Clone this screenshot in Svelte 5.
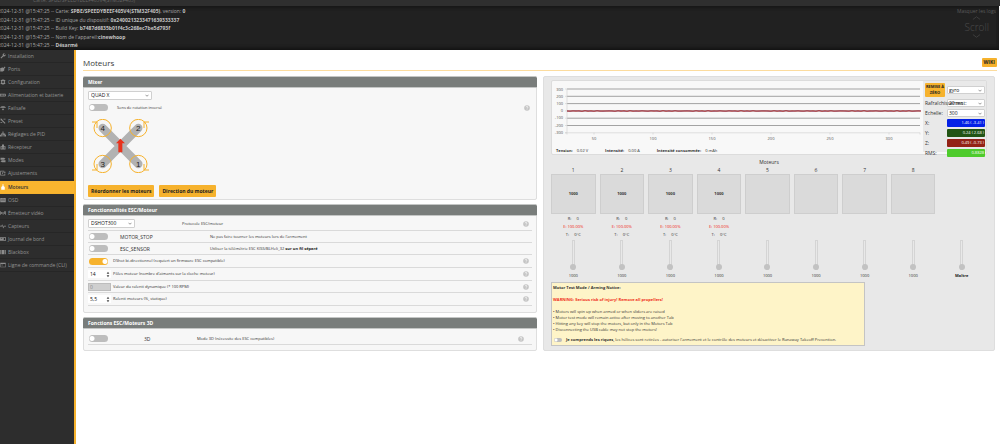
<script lang="ts">
  const logs = [
    { text: 'Carte: ', strong: 'SPBE/SPEEDYBEEF405V4(STM32F405)', rest: ', version: ', end: '0' },
    { text: 'ID unique du dispositif: ', strong: '0x2400213233471639333337' },
    { text: 'Build Key: ', strong: 'b7487d6835b01f4c3c268ec7be5d793f' },
    { text: "Nom de l'appareil:", strong: 'cinewhoop' },
    { text: '', strong: 'Désarmé' },
  ];

  const tabs = [
    { name: 'Installation', icon: 'M2 19 L11 10 A6 6 0 0 1 19 2 L15 6 L18 9 L22 5 A6 6 0 0 1 14 13 L5 22 Z' },
    { name: 'Ports', icon: 'M1 8 H7 V4 L13 8 L19 2 L22 5 L17 11 V18 L11 22 H1 Z' },
    { name: 'Configuration', icon: 'M10 1 H14 L15 5 L19 3 L22 7 L19 10 V14 L22 17 L19 21 L15 19 L14 23 H10 L9 19 L5 21 L2 17 L5 14 V10 L2 7 L5 3 L9 5 Z M12 8 A4 4 0 1 0 12 16 A4 4 0 1 0 12 8 Z' },
    { name: 'Alimentation et batterie', icon: 'M0 7 H22 V10 H24 V15 H22 V18 H0 Z M3 10 V15 H7 V10 Z M9 10 V15 H13 V10 Z M15 10 V15 H19 V10 Z' },
    { name: 'Failsafe', icon: 'M0 10 C4 3 20 3 24 10 L19 12 L16 10 L13 12 V16 H17 L12 22 L7 16 H11 V12 L8 10 L5 12 Z' },
    { name: 'Preset', icon: 'M2 2 L10 4 L8 6 L22 20 L19 23 L5 9 L3 11 Z M14 3 H22 V6 H14 Z M2 16 H9 V19 H2 Z' },
    { name: 'Réglages de PID', icon: 'M10 2 H14 V10 H21 V15 H24 V22 H17 V15 H14 V22 H10 V13 H7 V22 H0 V15 H4 V10 H10 Z' },
    { name: 'Récepteur', icon: 'M8 2 H16 V9 H22 V22 H2 V9 H8 Z M5 13 V18 H9 V13 Z M15 13 V18 H19 V13 Z' },
    { name: 'Modes', icon: 'M2 3 H16 L22 7 L16 11 H2 Z M22 13 H8 L2 17 L8 21 H22 Z' },
    { name: 'Ajustements', icon: 'M1 3 H17 V6 H4 V19 H18 V14 H21 V22 H1 Z M8 9 H11 V16 H8 Z M14 7 H22 V11 H14 Z' },
    { name: 'Moteurs', icon: 'M10 1 H14 V8 L19 12 V23 H5 V12 L10 8 Z' },
    { name: 'OSD', icon: 'M1 4 H23 V21 H1 Z M4 11 V13 H20 V11 Z M11 6 V9 H13 V6 Z' },
    { name: 'Émetteur vidéo', icon: 'M0 5 H3 V19 H0 Z M5 8 H9 V16 H5 Z M11 8 H14 V19 H11 Z M16 5 H19 V16 H16 Z M21 5 H24 V19 H21 Z' },
    { name: 'Capteurs', icon: 'M0 11 H6 L9 5 L13 16 L15 11 H24 V14 H17 L13 22 L9 11 L8 14 H0 Z' },
    { name: 'Journal de bord', icon: 'M0 5 H24 V19 H0 Z M3 8 V10 H9 V8 Z M15 8 V16 H21 V8 Z' },
    { name: 'Blackbox', icon: 'M1 4 H6 V21 H1 Z M8 4 H17 V21 H8 Z M19 4 H23 V21 H19 Z' },
    { name: 'Ligne de commande (CLI)', icon: 'M1 3 H23 V21 H1 Z M3 8 V19 H21 V8 Z M5 11 H12 V13 H5 Z' },
  ];

  const rotors = [
    { n: 4, x: 35, y: 27, flag: 'M3 9 H18 V27' },
    { n: 2, x: 142, y: 27, flag: 'M174 9 H159 V27' },
    { n: 3, x: 35, y: 135, flag: 'M3 153 H18 V135' },
    { n: 1, x: 142, y: 135, flag: 'M174 153 H159 V135' },
  ];

  const gridRows = [300, 200, 100, 0, -100, -200, -300];
  const gridTicks = [50, 100, 150, 200, 250, 300];

  const readings = [
    { label: 'X:', value: '1.46 ( -3.41 )', color: '#0421e6' },
    { label: 'Y:', value: '0.24 ( 2.68 )', color: '#225414' },
    { label: 'Z:', value: '0.49 ( -0.73 )', color: '#932216' },
    { label: 'RMS:', value: '0.8828', color: '#4ecb2c' },
  ];

  const motors = [1, 2, 3, 4, 5, 6, 7, 8];

  let sliders = $state([1000, 1000, 1000, 1000, 1000, 1000, 1000, 1000, 1000]);
  let reversed = $state(false);
  let motorStop = $state(false);
  let escSensor = $state(false);
  let bidir = $state(true);
  let mode3d = $state(false);
  let accepted = $state(false);
  let poles = $state(14);
  let idleValue = $state('5,5');

  // small deterministic wobble around zero for the gyro traces
  function trace(seed: number) {
    let d = '';
    for (let i = 0; i <= 118; i++) {
      const y = 30 + Math.sin(i * seed) * 0.3;
      d += `${i ? 'L' : 'M'}${15 + i * 3} ${y.toFixed(2)} `;
    }
    return d;
  }
</script>

{#snippet help()}
  <svg class="help" viewBox="0 0 12 12" role="img" aria-label="Aide">
    <circle cx="6" cy="6" r="5.6" fill="#c4c4c4" />
    <path d="M4.2 4.7 A1.8 1.8 0 1 1 6.6 6.2 Q6 6.5 6 7.3 M6 8.4 V9.6" fill="none" stroke="#fff" stroke-width="1.3" />
  </svg>
{/snippet}

<div class="app">
  <header class="topbar"><span>Carte: SPBE/SPEEDYBEEF405V4(STM32F405)</span></header>

  <section class="log">
    <div class="log-lines">
      {#each logs as line}
        <p>2024-12-31 @15:47:25 -- {line.text}<b>{line.strong}</b>{line.rest ?? ''}<b>{line.end ?? ''}</b></p>
      {/each}
    </div>
    <div class="log-side">
      <a href="#logs">Masquer les logs</a>
      <div class="scroll">
        <svg viewBox="0 0 10 4"><path d="M1 3.6 L5 .6 L9 3.6" /></svg>
        <span>Scroll</span>
        <svg viewBox="0 0 10 4"><path d="M1 .4 L5 3.4 L9 .4" /></svg>
      </div>
    </div>
  </section>

  <div class="body">
    <nav class="sidebar">
      {#each tabs as tab}
        <a href="#{tab.name}" class:active={tab.name === 'Moteurs'}>
          <svg viewBox="0 0 24 24"><path d={tab.icon} fill-rule="evenodd" /></svg>
          <span>{tab.name}</span>
        </a>
      {/each}
    </nav>

    <main class="content">
      <div class="title">
        <h1>Moteurs</h1>
        <a class="wiki" href="#wiki">WIKI</a>
      </div>

      <div class="columns">
        <div class="left">
          <section class="box">
            <h2>Mixer</h2>
            <div class="mixer">
              <select class="select mixer-select" aria-label="Mixer"><option>QUAD X</option></select>
              <div class="mixer-row">
                <input id="reversed" class="toggle" type="checkbox" bind:checked={reversed} />
                <label for="reversed">Sens de rotation inversé</label>
                {@render help()}
              </div>
              <svg class="quad" viewBox="0 0 177 162">
                <path d="M35 27 L142 135 M142 27 L35 135" stroke="#b2b2b2" stroke-width="25" stroke-linecap="round" />
                {#each rotors as r}
                  <circle cx={r.x} cy={r.y} r="26" />
                  <path class="flag" d={r.flag} />
                  <text x={r.x} y={r.y + 8}>{r.n}</text>
                {/each}
                <path d="M88 59 L102 73 H94 V100 H82 V73 H75 Z" fill="#e8321c" />
              </svg>
              <div class="buttons">
                <button>Réordonner les moteurs</button>
                <button>Direction du moteur</button>
              </div>
            </div>
          </section>

          <section class="box">
            <h2>Fonctionnalités ESC/Moteur</h2>
            <div class="rows">
              <div class="row first">
                <span class="lead proto"><select id="proto" class="select proto-select"><option>DSHOT300</option></select></span>
                <label for="proto">Protocole ESC/moteur</label>
                {@render help()}
              </div>
              <div class="row">
                <input id="stop" class="toggle" type="checkbox" bind:checked={motorStop} />
                <label class="feature" for="stop">MOTOR_STOP</label>
                <span>Ne pas faire tourner les moteurs lors de l'armement</span>
              </div>
              <div class="row">
                <input id="sensor" class="toggle" type="checkbox" bind:checked={escSensor} />
                <label class="feature" for="sensor">ESC_SENSOR</label>
                <span>Utiliser la télémétrie ESC KISS/BLHeli_32 <b>sur un fil séparé</b></span>
              </div>
              <div class="row tall">
                <span class="lead"><input id="bidir" class="toggle" type="checkbox" bind:checked={bidir} /></span>
                <label for="bidir">DShot bi-directionnel (requiert un firmware ESC compatible)</label>
                {@render help()}
              </div>
              <div class="row tall">
                <span class="lead num">
                  <input id="poles" type="text" inputmode="numeric" bind:value={poles} />
                  <svg viewBox="0 0 6 10"><path d="M1 4 L3 1 L5 4 Z M1 6 L3 9 L5 6 Z" /></svg>
                </span>
                <label for="poles">Pôles moteur (nombre d'aimants sur la cloche moteur)</label>
                {@render help()}
              </div>
              <div class="row">
                <span class="lead num"><input id="dyn" type="text" value="0" disabled /></span>
                <label for="dyn">Valeur du ralenti dynamique (* 100 RPM)</label>
                {@render help()}
              </div>
              <div class="row tall">
                <span class="lead num">
                  <input id="idle" type="text" inputmode="decimal" bind:value={idleValue} />
                  <svg viewBox="0 0 6 10"><path d="M1 4 L3 1 L5 4 Z M1 6 L3 9 L5 6 Z" /></svg>
                </span>
                <label for="idle">Ralenti moteurs (%, statique)</label>
                {@render help()}
              </div>
            </div>
          </section>

          <section class="box">
            <h2>Fonctions ESC/Moteurs 3D</h2>
            <div class="rows three">
              <div class="row">
                <input id="mode3d" class="toggle" type="checkbox" bind:checked={mode3d} />
                <label class="feature" for="mode3d">3D</label>
                <span>Mode 3D (nécessite des ESC compatibles)</span>
                {@render help()}
              </div>
            </div>
          </section>
        </div>

        <section class="right">
          <div class="plot">
            <div class="graph">
              <svg class="chart" viewBox="0 0 371 62">
                {#each gridRows as v, i}
                  <text class="y" x="11" y={9.5 + i * 7.2}>{v}</text>
                  <path class={i === 6 ? 'axis' : 'grid'} d="M{i === 6 ? 13 : 15} {8 + i * 7.3} H368" />
                  <path class="axis" d="M13 {8 + i * 7.3} H15" />
                {/each}
                <path class="axis" d="M15 8 V53.5 M368 51.8 V53.5" />
                {#each gridTicks as v, i}
                  <path class="axis" d="M{42 + i * 59} 51.8 V53.5" />
                  <text class="x" x={42 + i * 59} y="58.5">{v}</text>
                {/each}
                <g class="traces">
                  <path d={trace(1.7)} stroke="#8a4a80" />
                  <path d={trace(2.9)} stroke="#b5382a" />
                </g>
              </svg>
              <dl class="power">
                <div><dt>Tension:</dt><dd>0.02 V</dd></div>
                <div><dt>Intensité:</dt><dd>0.00 A</dd></div>
                <div><dt>Intensité consommée:</dt><dd>0 mAh</dd></div>
              </dl>
            </div>
            <div class="panel">
              <div class="reading">
                <button class="reset">REMISE À ZÉRO</button>
                <select class="select" aria-label="Capteur"><option>gyro</option></select>
              </div>
              <div class="reading">
                <label for="rate">Rafraîchissement:</label>
                <select id="rate" class="select"><option>20 ms</option></select>
              </div>
              <div class="reading">
                <label for="scale">Echelle:</label>
                <select id="scale" class="select"><option>300</option></select>
              </div>
              {#each readings as r}
                <div class="reading">
                  <span class="name">{r.label}</span>
                  <output style="background: {r.color}">{r.value}</output>
                </div>
              {/each}
            </div>
          </div>

          <h3>Moteurs</h3>
          <div class="motors">
            {#each motors as m}
              <div class="motor">
                <span>{m}</span>
                <div class="bar">{m <= 4 ? '1000' : ''}</div>
                <div class="telemetry">
                  {#if m <= 4}
                    <p>R: &nbsp;&nbsp;&nbsp; 0</p>
                    <p class="error">E: 100.00%</p>
                    <p>T: &nbsp;&nbsp;&nbsp; 0°C</p>
                  {/if}
                </div>
              </div>
            {/each}
          </div>
          <div class="motors">
            {#each sliders as _, i}
              <div class="slider">
                <input id="slider{i}" type="range" min="1000" max="2000" bind:value={sliders[i]} />
                <label for="slider{i}" class:master={i === 8}>{i === 8 ? 'Maître' : sliders[i]}</label>
              </div>
            {/each}
          </div>

          <div class="notice">
            <p><b>Motor Test Mode / Arming Notice:</b></p>
            <p class="warning">WARNING: Serious risk of injury! Remove all propellers!</p>
            <ul>
              <li>• Motors will spin up when armed or when sliders are raised</li>
              <li>• Motor test mode will remain active after moving to another Tab</li>
              <li>• Hitting any key will stop the motors, but only in the Motors Tab</li>
              <li>• Disconnecting the USB cable may not stop the motors!</li>
            </ul>
            <div class="accept">
              <input id="accept" class="toggle small" type="checkbox" bind:checked={accepted} />
              <label for="accept"><b>Je comprends les riques</b>, les hélices sont retirées - autoriser l'armement et le contrôle des moteurs et désactiver le Runaway Takeoff Prevention.</label>
            </div>
          </div>
        </section>
      </div>
    </main>
  </div>
</div>

<style>
  :global(body) {
    margin: 0;
    background: #fff;
  }

  .app {
    display: flex;
    flex-direction: column;
    min-height: 100vh;
    overflow: hidden;
    font: 4px/6px 'Open Sans', 'Noto Sans', sans-serif;
    color: #303030;
  }

  .app * {
    box-sizing: border-box;
  }

  p, h1, h2, h3, ul, dl, dd {
    margin: 0;
    padding: 0;
    list-style: none;
  }

  a {
    color: inherit;
    text-decoration: none;
  }

  button, input, select {
    margin: 0;
    font: inherit;
    color: inherit;
  }

  .topbar {
    display: flex;
    align-items: flex-end;
    height: 6px;
    padding: 0 0 3px 33px;
    overflow: hidden;
    background: #2f2f2f;
    color: #666;
    font-size: 5px;
  }

  .log {
    display: flex;
    justify-content: space-between;
    min-height: 44px;
    margin-right: 1px;
    padding: 1px 3px 0 0;
    background: #212121;
    border-bottom: 1px solid #141414;
    box-shadow: inset 0 2px 3px #181818, inset 0 -2px 3px #181818;
    font-size: 5px;
    line-height: 8px;
    color: #a8a8a8;
  }

  .log-lines {
    display: flex;
    flex-direction: column;
    justify-content: space-between;
    margin-left: -2px;
  }

  .log b {
    color: #c4c4c4;
  }

  .log-side {
    display: flex;
    flex-direction: column;
    align-items: flex-end;
    color: #5a5a5a;
  }

  .scroll {
    display: flex;
    flex-direction: column;
    align-items: center;
    gap: 1px;
    padding: 1px 7px 0 0;
    font-size: 10px;
    font-weight: 300;
    line-height: 12px;
    color: #4c4c4c;
  }

  .scroll svg {
    width: 9px;
    height: 4px;
    fill: none;
    stroke: #4c4c4c;
    stroke-width: 0.7;
  }

  .body {
    display: flex;
    flex: 1;
  }

  .sidebar {
    flex: none;
    width: 76px;
    background: #2d2d2d;
    border-right: 2px solid #f6b22d;
    color: #949494;
    font-size: 5px;
    white-space: nowrap;
  }

  .sidebar a {
    display: flex;
    align-items: center;
    gap: 2px;
    height: 13px;
    border-bottom: 1px solid #262626;
  }

  .sidebar svg {
    width: 6px;
    height: 6px;
    fill: #8c8c8c;
  }

  .sidebar .active {
    margin-top: 1px;
    border-color: #f6b22d;
    background: #f9b52f;
    color: #333;
    font-weight: 600;
  }

  .sidebar .active svg {
    fill: #fff;
  }

  .content {
    flex: 1;
    min-width: 0;
    padding: 0 3px 0 7px;
  }

  .title {
    display: flex;
    align-items: center;
    justify-content: space-between;
    height: 21px;
    padding-top: 5px;
    border-bottom: 1px solid #fcdc9e;
  }

  h1 {
    font-size: 8px;
    font-weight: 400;
    line-height: 12px;
    color: #3a3a3a;
  }

  .wiki {
    padding: 1px 2px 2px;
    border-radius: 1px;
    background: #f6b22d;
    color: #222;
    font-size: 5px;
    font-weight: 700;
  }

  .columns {
    display: grid;
    grid-template-columns: minmax(0, 227fr) minmax(0, 226fr);
    gap: 6px;
    padding: 5px 2px 0 0;
  }

  .left {
    display: flex;
    flex-direction: column;
    gap: 4px;
  }

  .box {
    border: 1px solid #dedede;
    border-radius: 2px;
    background: #f7f7f7;
  }

  h2 {
    margin: -1px -1px 0;
    padding: 2px 5px 1px;
    border: 1px solid #c4c6c5;
    border-width: 1px 0;
    border-radius: 2px 2px 0 0;
    background: #797d7b;
    color: #fff;
    font-size: 5px;
    line-height: 7px;
  }

  .select {
    height: 9px;
    padding: 0 2px;
    appearance: none;
    border: 1px solid #d0d0d0;
    border-radius: 1px;
    background: #fff url("data:image/svg+xml,%3Csvg xmlns='http://www.w3.org/2000/svg' viewBox='0 0 8 5'%3E%3Cpath d='M1 1 L4 4 L7 1' fill='none' stroke='%23555' stroke-width='1.2'/%3E%3C/svg%3E") no-repeat right 2px center / 4px 3px;
    color: #111;
    font-size: 5px;
    line-height: 7px;
  }

  .toggle {
    flex: none;
    width: 19px;
    height: 7px;
    appearance: none;
    border-radius: 4px;
    background: radial-gradient(circle at 3px 50%, #fff 2px, transparent 3px), #bdbdbd;
  }

  .toggle:checked {
    background: radial-gradient(circle at 16px 50%, #fff 2px, transparent 3px), #f6b22d;
  }

  .toggle.small {
    width: 8px;
    height: 4px;
    background: radial-gradient(circle at 2px 50%, #fff 1px, transparent 2px), #bdbdbd;
  }

  .help {
    flex: none;
    width: 6px;
    height: 6px;
    margin-left: auto;
  }

  .mixer {
    display: flex;
    flex-direction: column;
    align-items: flex-start;
    padding: 3px 6px 2px 4px;
  }

  .mixer-select {
    width: 64px;
  }

  .mixer-row {
    display: flex;
    align-items: center;
    align-self: stretch;
    gap: 9px;
    padding: 4px 0 0 1px;
  }

  .quad {
    width: 59px;
    height: 54px;
    margin: 8px 0 12px 3px;
  }

  .quad circle, .flag {
    fill: none;
    stroke: #f6b22d;
    stroke-width: 3;
  }

  .quad text {
    fill: #222;
    font: 24px 'Liberation Sans', sans-serif;
    text-anchor: middle;
  }

  .buttons {
    display: flex;
    gap: 5px;
  }

  .buttons button {
    padding: 3px;
    border: 0;
    border-radius: 1px;
    background: #f6b22d;
    color: #222;
    font-size: 5px;
    font-weight: 700;
  }

  .rows {
    padding: 1px 4px 6px;
  }

  .row {
    display: flex;
    align-items: center;
    height: 12px;
    padding: 0 3px 0 1px;
    border-bottom: 1px solid #dadada;
  }

  .row.first {
    height: 14px;
  }

  .row.tall {
    height: 13px;
  }

  .lead {
    display: flex;
    flex: none;
    align-items: center;
    width: 24px;
  }

  .lead.proto {
    width: 93px;
  }

  .proto-select {
    width: 47px;
    margin-left: -1px;
  }

  .feature {
    width: 102px;
    padding-left: 12px;
    font-size: 5px;
  }

  .row > span b {
    color: #222;
  }

  .num input {
    width: 23px;
    height: 8px;
    margin-left: -1px;
    padding: 0 2px;
    border: 0;
    background: #fff;
    color: #111;
    font-size: 5px;
  }

  .num input:disabled {
    border: 1px solid #bdbdbd;
    padding: 0 1px;
    background: #cfcfcf;
    color: #888;
  }

  .num svg {
    width: 4px;
    height: 7px;
    margin-left: -5px;
    fill: #444;
  }

  .three {
    padding: 4px 4px 5px;
  }

  .three .row {
    padding-right: 8px;
  }

  .three .feature {
    width: 89px;
    padding-left: 36px;
  }

  .right {
    padding: 3px 7px 4px;
    border: 1px solid #dedede;
    border-radius: 2px;
    background: #e8e8e8;
  }

  .plot {
    display: flex;
    height: 75px;
    border: 1px solid #dcdcdc;
    border-radius: 2px;
    background: #f8f8f8;
  }

  .graph {
    flex: 1;
    min-width: 0;
  }

  .chart {
    display: block;
    width: 100%;
  }

  .chart text {
    fill: #555;
    font-size: 4px;
  }

  .chart .y {
    text-anchor: end;
  }

  .chart .x {
    text-anchor: middle;
  }

  .grid {
    stroke: #999;
    stroke-width: 0.9;
  }

  .axis {
    stroke: #ccc;
    stroke-width: 0.6;
  }

  .traces {
    fill: none;
    stroke-width: 0.9;
  }

  .power {
    display: flex;
    gap: 17px;
    padding: 5px 4px 0;
    white-space: nowrap;
  }

  .power div {
    display: flex;
    gap: 4px;
  }

  dt {
    color: #333;
    font-weight: 700;
  }

  .panel {
    display: flex;
    flex: none;
    flex-direction: column;
    gap: 2px;
    width: 63px;
    height: 71px;
    padding: 2px 1px 0 2px;
    background: #e9e9e9;
    font-size: 5px;
  }

  .reading {
    display: flex;
    align-items: center;
    flex: none;
  }

  .reading label, .name {
    z-index: 1;
    width: 22px;
    white-space: nowrap;
  }

  .reading .select {
    flex: 1;
    min-width: 0;
    height: 8px;
    padding: 0 1px;
    line-height: 6px;
  }

  .reset {
    width: 20px;
    margin-right: 2px;
    padding: 1px 0;
    border: 0;
    border-radius: 1px;
    background: #f6b22d;
    color: #222;
    font-size: 4px;
    font-weight: 700;
  }

  output {
    flex: 1;
    height: 8px;
    padding: 0 1px;
    border-radius: 1px;
    color: #fff;
    font-size: 4px;
    line-height: 8px;
    text-align: right;
  }

  h3 {
    padding-top: 4px;
    font-size: 5px;
    font-weight: 400;
    line-height: 7px;
    text-align: center;
  }

  .motors {
    display: grid;
    grid-template-columns: repeat(9, 1fr);
    gap: 4px;
    padding-right: 3px;
  }

  .motor {
    font-size: 5px;
    line-height: 8px;
    text-align: center;
  }

  .motor > span {
    display: block;
    color: #333;
  }

  .bar {
    height: 40px;
    border: 1px solid #cecece;
    background: #dadada;
    color: #333;
    font-size: 4px;
    font-weight: 700;
    line-height: 38px;
  }

  .telemetry {
    height: 26px;
    padding-top: 1px;
    font-size: 4px;
  }

  .telemetry .error {
    color: #f01c10;
  }

  .slider {
    display: flex;
    flex-direction: column;
    align-items: center;
    gap: 3px;
  }

  .slider input {
    width: 7px;
    height: 30px;
    appearance: none;
    background: linear-gradient(#e8e8e8, #e8e8e8) center / 1px 28px no-repeat, linear-gradient(#d4d4d4, #d4d4d4) center / 3px 30px no-repeat;
    writing-mode: vertical-lr;
    direction: rtl;
  }

  .slider input::-webkit-slider-thumb {
    width: 6px;
    height: 6px;
    appearance: none;
    border-radius: 50%;
    background: #c2c2c2;
  }

  .master {
    color: #222;
    font-weight: 700;
  }

  .notice {
    width: 72%;
    margin-top: 3px;
    padding: 2px 2px 2px 1px;
    border: 1px solid #c4c4c4;
    background: #fef4c8;
    color: #333;
  }

  .notice .warning {
    padding: 6px 0;
    color: #f03020;
    font-weight: 700;
  }

  .accept {
    display: flex;
    align-items: center;
    gap: 4px;
    padding: 4px 0 0 1px;
  }
</style>
